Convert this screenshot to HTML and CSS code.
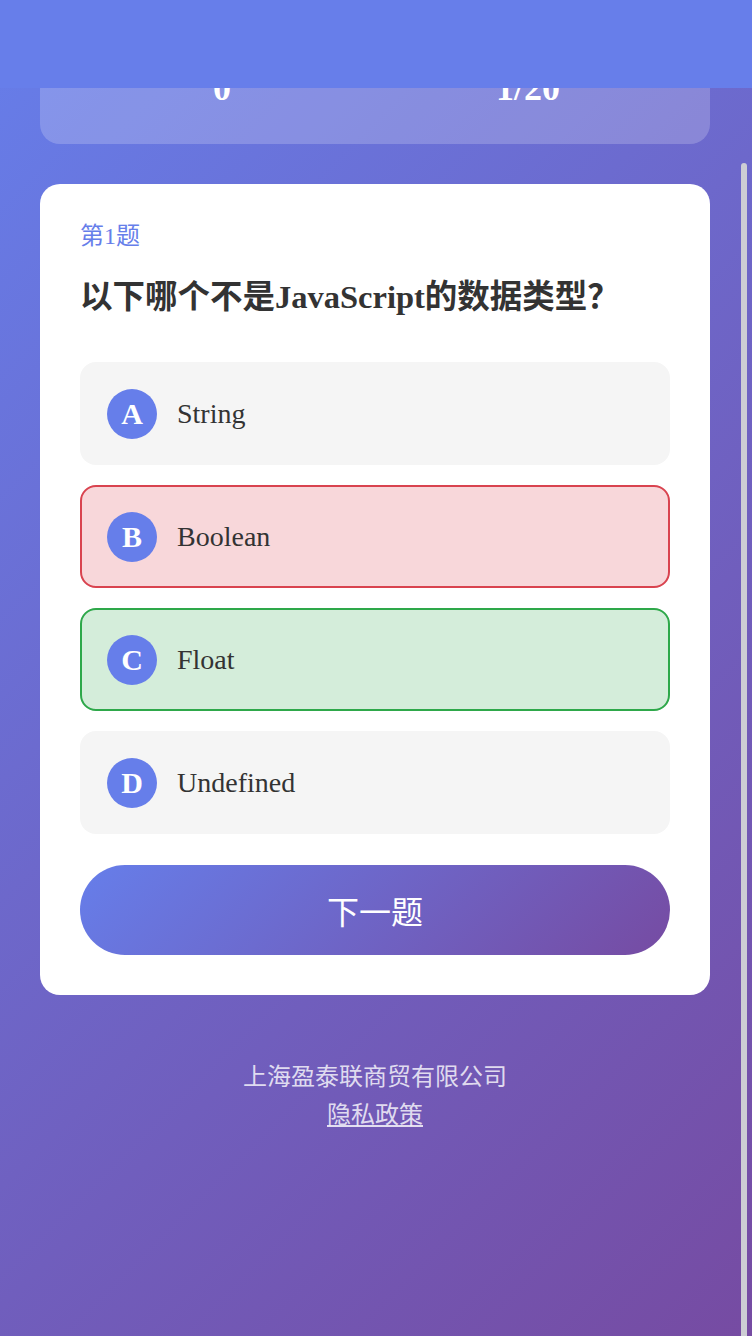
FILE: index.html
```html
<!DOCTYPE html>
<html lang="zh-CN">
<head>
<meta charset="utf-8">
<title>答题</title>
<link rel="stylesheet" href="styles.css">
</head>
<body>
<header class="topbar"></header>
<main class="page">
  <section class="stats">
    <div class="stat">
      <div class="stat-label">得分</div>
      <div class="stat-value">0</div>
    </div>
    <div class="stat">
      <div class="stat-label">进度</div>
      <div class="stat-value">1/20</div>
    </div>
  </section>

  <section class="quiz-card">
    <div class="q-index">第1题</div>
    <h2 class="q-title">以下哪个不是JavaScript的数据类型<span class="cjk-punct">？</span></h2>
    <ul class="options">
      <li class="option"><span class="letter">A</span><span class="opt-text">String</span></li>
      <li class="option wrong"><span class="letter">B</span><span class="opt-text">Boolean</span></li>
      <li class="option right"><span class="letter">C</span><span class="opt-text">Float</span></li>
      <li class="option"><span class="letter">D</span><span class="opt-text">Undefined</span></li>
    </ul>
    <button class="next-btn" type="button">下一题</button>
  </section>

  <footer class="footer">
    <p class="company">上海盈泰联商贸有限公司</p>
    <a class="privacy" href="#">隐私政策</a>
  </footer>
</main>
<div class="scroll-thumb"></div>
</body>
</html>
```

FILE: styles.css
```css
html {
  height: 100%;
}
body {
  margin: 0;
  min-height: 100%;
  background: linear-gradient(135deg, #667eea 0%, #764ba2 100%);
  font-family: "Liberation Serif", "Noto Sans CJK SC", serif;
  color: #333;
  overflow: hidden;
}
.topbar {
  position: fixed;
  top: 0;
  left: 0;
  right: 0;
  height: 88px;
  background: #677eea;
  z-index: 10;
}
.page {
  width: 750px;
  box-sizing: border-box;
  padding: 18px 40px 0;
  display: flex;
  flex-direction: column;
}
.stats {
  display: grid;
  grid-template-columns: 1fr 1fr;
  padding: 20px 29px 35px;
  background: rgba(255, 255, 255, 0.2);
  border-radius: 20px;
  color: #fff;
  text-align: center;
}
.stat-label {
  font-size: 22px;
  line-height: 30px;
  opacity: 0.9;
}
.stat-value {
  font-size: 36px;
  font-weight: bold;
  line-height: 41px;
}
.quiz-card {
  margin-top: 40px;
  background: #fff;
  border-radius: 20px;
  padding: 36px 40px 40px;
}
.q-index {
  font-size: 24px;
  line-height: 32px;
  color: #667eea;
}
.q-title {
  margin: 23px 0 0;
  font-size: 32.5px;
  line-height: 44px;
  font-weight: bold;
  color: #333;
}
.cjk-punct {
  font-family: "Noto Sans CJK JP", sans-serif;
  line-height: 0;
}
.options {
  list-style: none;
  margin: 43px 0 0;
  padding: 0;
  display: flex;
  flex-direction: column;
  gap: 20px;
}
.option {
  display: flex;
  align-items: center;
  gap: 20px;
  padding: 24.5px 25px;
  background: #f5f5f5;
  border: 2px solid transparent;
  border-radius: 16px;
}
.option.wrong {
  background: #f8d7da;
  border-color: #d9434f;
}
.option.right {
  background: #d4edda;
  border-color: #2ea84a;
}
.letter {
  width: 50px;
  height: 50px;
  flex: none;
  border-radius: 50%;
  background: #667eea;
  color: #fff;
  font-size: 30px;
  font-weight: bold;
  display: flex;
  align-items: center;
  justify-content: center;
}
.opt-text {
  font-size: 28px;
  color: #333;
}
.next-btn {
  margin-top: 31px;
  width: 100%;
  height: 90px;
  border: none;
  border-radius: 45px;
  background: linear-gradient(135deg, #667eea 0%, #764ba2 100%);
  color: #fff;
  font-family: inherit;
  font-size: 32px;
}
.footer {
  margin-top: 63px;
  text-align: center;
  font-size: 24px;
  line-height: 38px;
  color: rgba(255, 255, 255, 0.8);
}
.company {
  margin: 0;
}
.privacy {
  color: rgba(255, 255, 255, 0.8);
  text-decoration: underline;
}
.scroll-thumb {
  position: fixed;
  top: 163px;
  bottom: 0;
  right: 5px;
  width: 6px;
  background: #cdcdd4;
  border-radius: 3px 3px 0 0;
  z-index: 20;
}
```
